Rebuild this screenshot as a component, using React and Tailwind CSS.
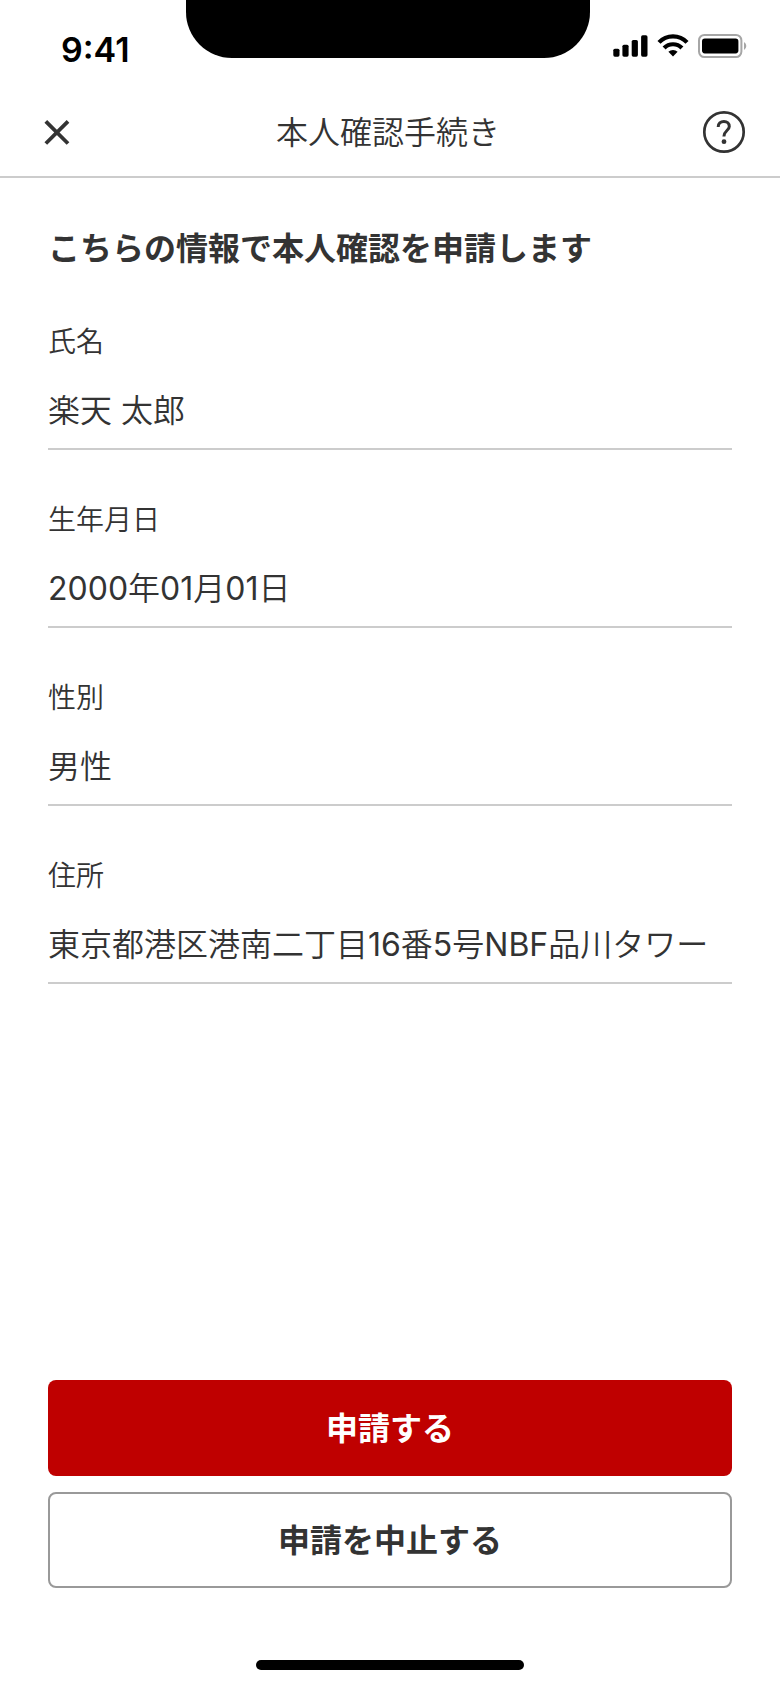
import React from "react";

const fields = [
  { label: "氏名", value: "楽天 太郎" },
  { label: "生年月日", value: "2000年01月01日" },
  { label: "性別", value: "男性" },
  { label: "住所", value: "東京都港区港南二丁目16番5号NBF品川タワー" },
];

function StatusBar() {
  return (
    <div className="grid h-[88px] grid-cols-[186fr_404fr_190fr] items-start text-black">
      <time className="pt-[30px] pl-[61px] text-[34px] leading-10 font-semibold">9:41</time>
      <div className="h-[58px] rounded-b-[46px] bg-black" />
      <div className="flex justify-end gap-2 pt-[34px] pr-8">
        <svg className="h-6 w-9" viewBox="0 0 36 24" fill="currentColor" aria-hidden="true">
          <rect x="1.3" y="14.7" width="6.2" height="8" rx="1.6" />
          <rect x="10.4" y="10.7" width="6.2" height="12" rx="1.6" />
          <rect x="19.7" y="6" width="6.2" height="16.7" rx="1.6" />
          <rect x="29.1" y="1.3" width="6.4" height="21.4" rx="1.6" />
        </svg>
        <svg className="h-6 w-[34px]" viewBox="0 0 34 24" aria-hidden="true">
          <g fill="none" stroke="currentColor" strokeWidth="4.2">
            <path d="M3 8.4 A19.2 19.2 0 0 1 31 8.4" />
            <path d="M8.1 14 A12.4 12.4 0 0 1 25.9 14" />
          </g>
          <path d="M17 22.4 L12.4 17.8 A6.8 6.8 0 0 1 21.6 17.8 Z" fill="currentColor" />
        </svg>
        <svg className="h-6 w-[50px]" viewBox="0 0 50 24" aria-hidden="true">
          <rect x="1" y="1" width="42.4" height="22" rx="5.4" fill="none" stroke="#a6a6a6" strokeWidth="2" />
          <rect x="4" y="4.6" width="36.4" height="14.8" rx="2.8" fill="currentColor" />
          <path d="M46 8 A4.6 4.6 0 0 1 46 16 Z" fill="#a6a6a6" />
        </svg>
      </div>
    </div>
  );
}

function NavBar() {
  return (
    <header className="flex h-[90px] items-center border-b-2 border-[#ccc] pr-8 pl-7">
      <button type="button" aria-label="閉じる" className="size-12">
        <svg className="size-12" viewBox="0 0 48 48" fill="none" stroke="currentColor" strokeWidth="3.8" aria-hidden="true">
          <path d="M17.8 13.3 L40 35.5 M40 13.3 L17.8 35.5" />
        </svg>
      </button>
      <h1 className="flex-1 pt-0.5 text-center text-[32px] leading-[48px]">本人確認手続き</h1>
      <button type="button" aria-label="ヘルプ" className="size-12">
        <svg className="size-12" viewBox="0 0 48 48" fill="none" stroke="currentColor" aria-hidden="true">
          <circle cx="24" cy="24" r="19.7" strokeWidth="2.7" />
          <path d="M18.2 18.9 C18.2 15.6 20.6 13.5 23.9 13.5 C27.2 13.5 29.3 15.6 29.3 18.4 C29.3 22.4 23.9 22.8 23.9 28.4" strokeWidth="3" />
          <circle cx="24" cy="33.7" r="2.4" fill="currentColor" stroke="none" />
        </svg>
      </button>
    </header>
  );
}

export default function App() {
  return (
    <div className="flex min-h-screen flex-col bg-white font-['Inter','Noto_Sans_CJK_JP_DemiLight','Noto_Sans_CJK_JP',sans-serif] text-[#333]">
      <StatusBar />
      <NavBar />
      <main className="flex flex-1 flex-col px-12 pt-12 pb-[72px]">
        <h2 className="font-['Inter','Noto_Sans_CJK_JP',sans-serif] text-[32px] leading-[46px] font-bold">
          こちらの情報で本人確認を申請します
        </h2>
        <dl>
          {fields.map((field) => (
            <div key={field.label} className="border-b-2 border-[#ccc] pt-[50px] pb-3">
              <dt className="text-[28px] leading-10">{field.label}</dt>
              <dd className="mt-6 text-[32px] leading-[50px]">{field.value}</dd>
            </div>
          ))}
        </dl>
        <div className="mt-auto flex flex-col gap-4 font-['Inter','Noto_Sans_CJK_JP',sans-serif] text-[32px] font-bold">
          <button type="button" className="h-24 rounded-lg bg-[#bf0000] pt-0.5 text-white">申請する</button>
          <button type="button" className="h-24 rounded-lg border-2 border-[#999] bg-white pt-0.5">申請を中止する</button>
        </div>
      </main>
      <div className="mb-[18px] h-[10px] w-[268px] self-center rounded-full bg-black" />
    </div>
  );
}
